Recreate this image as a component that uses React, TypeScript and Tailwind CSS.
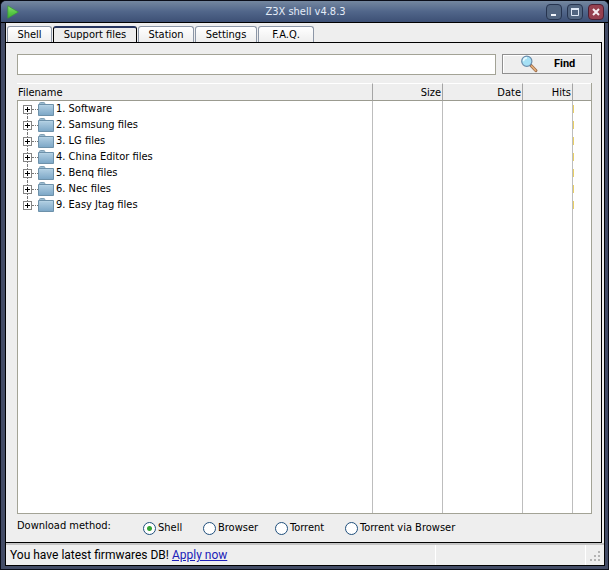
import { useState } from 'react'

const tabs = [
  { name: 'Shell', width: 'w-[45px]' },
  { name: 'Support files', width: 'w-[84px]' },
  { name: 'Station', width: 'w-[56px]' },
  { name: 'Settings', width: 'w-[62px]' },
  { name: 'F.A.Q.', width: 'w-[56px]' },
]

const folders = [
  '1. Software',
  '2. Samsung files',
  '3. LG files',
  '4. China Editor files',
  '5. Benq files',
  '6. Nec files',
  '9. Easy Jtag files',
]

const methods = [
  { name: 'Shell', width: 'w-[60px]' },
  { name: 'Browser', width: 'w-[72px]' },
  { name: 'Torrent', width: 'w-[70px]' },
  { name: 'Torrent via Browser', width: '' },
]

function PlayIcon() {
  return (
    <svg className="w-3 h-3.5" viewBox="0 0 12 14" aria-hidden="true">
      <defs>
        <linearGradient id="play" x1="0" y1="0" x2="0" y2="1">
          <stop offset="0" stopColor="#8be070" />
          <stop offset="0.5" stopColor="#5ccb48" />
          <stop offset="1" stopColor="#3fb030" />
        </linearGradient>
      </defs>
      <path d="M0.8 0.8v12.4L11.4 7z" fill="url(#play)" stroke="#3a9a3a" strokeWidth="0.8" strokeLinejoin="round" />
    </svg>
  )
}

function FolderIcon() {
  return (
    <svg className="w-4 h-4 shrink-0" viewBox="0 0 16 16" aria-hidden="true">
      <defs>
        <linearGradient id="folder" x1="0" y1="0" x2="0" y2="1">
          <stop offset="0" stopColor="#b4d1e4" />
          <stop offset="1" stopColor="#7ba6c6" />
        </linearGradient>
      </defs>
      <path d="M1.5 4V2.5q0-1 1-1h3.4q.8 0 .9 1V4z" fill="#9dbdd2" stroke="#7f9fb4" />
      <path d="M0.5 3.5h15v11H.5z" fill="url(#folder)" stroke="#6d91aa" />
      <path d="M1.5 4.5h13" stroke="#b4d1e4" />
    </svg>
  )
}

function SearchIcon() {
  return (
    <svg className="w-[18px] h-[18px]" viewBox="0 0 18 18" aria-hidden="true">
      <path d="M11 10.5l4.8 5" stroke="#9a6b48" strokeWidth="3.2" strokeLinecap="round" />
      <path d="M11.6 11l4 4.3" stroke="#e3ad79" strokeWidth="1.7" strokeLinecap="round" />
      <circle cx="6.8" cy="6.3" r="5.1" fill="#a5e0f5" stroke="#6a8cab" strokeWidth="1.2" />
      <path d="M3.5 6.2a3.5 3.5 0 0 1 3.5-3.3" fill="none" stroke="#e6faff" strokeWidth="1.6" />
    </svg>
  )
}

function TitleBar() {
  const button = 'w-4 h-4 rounded-[4px] border flex items-center justify-center'
  return (
    <header className="h-[22px] shrink-0 flex items-center pl-1.5 pr-1 border-b border-black bg-linear-to-b from-[#74879f] via-[#51668a] to-[#3d5075]">
      <div className="w-[60px]">
        <PlayIcon />
      </div>
      <h1 className="flex-1 text-center text-[#e4ecf8]">Z3X shell v4.8.3</h1>
      <div className="w-[60px] flex justify-end gap-[5px]">
        <button aria-label="Minimize" className={`${button} border-[#26344f] bg-[#526580]`}>
          <svg className="w-3 h-3" viewBox="0 0 12 12"><path d="M3 9h5" stroke="#f2f6fc" strokeWidth="2" /></svg>
        </button>
        <button aria-label="Maximize" className={`${button} border-[#26344f] bg-[#526580]`}>
          <svg className="w-3 h-3" viewBox="0 0 12 12">
            <path d="M2.5 2.5h7v7h-7z" fill="none" stroke="#dfe8f5" />
            <path d="M2 3h8" stroke="#dfe8f5" strokeWidth="2" />
          </svg>
        </button>
        <button aria-label="Close" className={`${button} border-[#4c1f33] bg-[#96404f]`}>
          <svg className="w-3 h-3" viewBox="0 0 12 12"><path d="M3 3l6 6M9 3l-6 6" stroke="#f6eef2" strokeWidth="2" /></svg>
        </button>
      </div>
    </header>
  )
}

function FileTable() {
  const head = 'font-normal border-r border-[#a5a5a5] border-b border-b-[#9b9b90] px-px pt-0.5 pb-0'
  const cell = 'border-r border-[#bdbdbd] p-0'
  return (
    <div className="flex-1 min-h-0 border-r border-b border-[#a3a396]">
      <table className="w-full h-full table-fixed border-separate border-spacing-0 bg-white">
        <colgroup>
          <col />
          <col className="w-[70px]" />
          <col className="w-[80px]" />
          <col className="w-[50px]" />
          <col className="w-[18px]" />
        </colgroup>
        <thead>
          <tr className="h-[18px] bg-[#eeeeee]">
            <th className={`${head} text-left border-t border-t-white`}>Filename</th>
            <th className={`${head} text-right border-t border-t-white`}>Size</th>
            <th className={`${head} text-right border-t border-t-white`}>Date</th>
            <th className={`${head} text-right border-t border-t-white`}>Hits</th>
            <th aria-label="Rating" className="border-t border-t-white border-b border-b-[#9b9b90]" />
          </tr>
        </thead>
        <tbody>
          {folders.map((folder, i) => (
            <tr key={folder} className="h-4">
              <td className={`${cell} border-l border-l-[#a3a396]`}>
                <div className="flex items-center h-4 pl-[5px]">
                  <div className="flex flex-col items-center h-4 w-[9px] shrink-0">
                    <span className={`h-1 w-px shrink-0 ${i > 0 ? 'border-l border-dotted border-[#777]' : ''}`} />
                    <button aria-label={`Expand ${folder}`} className="w-[9px] h-[9px] shrink-0 border border-[#848484] bg-white flex">
                      <svg className="w-[7px] h-[7px]" viewBox="0 0 7 7"><path d="M1 3.5h5M3.5 1v5" stroke="#000" /></svg>
                    </button>
                    <span className={`h-[3px] w-px shrink-0 ${i < folders.length - 1 ? 'border-l border-dotted border-[#777]' : ''}`} />
                  </div>
                  <span className="w-1.5 h-px border-t border-dotted border-[#777]" />
                  <FolderIcon />
                  <span className="pl-0.5 leading-4 whitespace-nowrap">{folder}</span>
                </div>
              </td>
              <td className={cell} />
              <td className={cell} />
              <td className={cell} />
              <td className="p-0"><div className="w-px h-2 bg-[#e8cf66]" /></td>
            </tr>
          ))}
          <tr>
            <td className={`${cell} border-l border-l-[#a3a396]`} />
            <td className={cell} />
            <td className={cell} />
            <td className={cell} />
            <td className="p-0" />
          </tr>
        </tbody>
      </table>
    </div>
  )
}

function App() {
  const [tab, setTab] = useState('Support files')
  const [method, setMethod] = useState('Shell')

  return (
    <div className="h-screen bg-black">
      <div className="h-full flex flex-col border border-[#0a0d18] rounded-t-md overflow-hidden bg-[#434c66] text-black text-[11px] leading-[14px] font-['DejaVu_Sans_Condensed','Noto_Sans',sans-serif]">
        <TitleBar />
        <div className="flex-1 min-h-0 flex flex-col ml-1 mr-[3px] mb-[3px] border-x border-b border-black bg-[#eeeeee]">
          <nav className="flex items-end gap-px h-[19px] shrink-0 pl-px">
            {tabs.map(({ name, width }) => (
              <button
                key={name}
                onClick={() => setTab(name)}
                className={
                  name === tab
                    ? `${width} h-4 rounded-t-[3px] border-x border-t-2 border-black border-t-[#26355f] bg-[#eeeeee]`
                    : `${width} h-4 rounded-t-[3px] border-x border-t border-[#8c96a6] bg-linear-to-b from-white to-[#eeeeee]`
                }
              >
                {name}
              </button>
            ))}
          </nav>

          <main className="flex-1 min-h-0 flex flex-col mr-0.5 border-t border-r border-b border-black pl-[11px] pr-[9px] pt-[11px]">
            <form className="flex gap-1.5 mb-2 shrink-0" onSubmit={(e) => e.preventDefault()}>
              <input type="text" aria-label="Search files" className="flex-1 min-w-0 h-[21px] px-1 border border-[#a3a396] bg-white outline-none" />
              <button type="submit" className="w-[90px] h-5 flex items-center pl-[17px] gap-4 border border-[#8f8f8f] bg-[#eeeeee] font-[Roboto,sans-serif] font-bold shadow-[inset_1px_1px_0_#fff]">
                <SearchIcon />
                Find
              </button>
            </form>

            <FileTable />

            <div role="radiogroup" aria-labelledby="method-label" className="flex items-center h-7 shrink-0 whitespace-nowrap">
              <span id="method-label" className="w-[126px] pb-1">Download method:</span>
              {methods.map((m) => (
                <label key={m.name} className={`flex items-center gap-0.5 ${m.width}`}>
                  <input
                    type="radio"
                    name="method"
                    checked={method === m.name}
                    onChange={() => setMethod(m.name)}
                    className="appearance-none w-[13px] h-[13px] shrink-0 rounded-full border border-[#1f4f7c] bg-white checked:bg-[radial-gradient(circle,#35a535_0_2px,#fff_3px)]"
                  />
                  {m.name}
                </label>
              ))}
            </div>
          </main>

          <footer className="h-[22px] shrink-0 flex items-center border-t-2 border-[#c4c4c4] pl-1 text-[12px] font-[Roboto,sans-serif]">
            <p className="flex-1">
              You have latest firmwares DB!{' '}
              <a href="#apply" className="text-[#2020b8] underline">Apply now</a>
            </p>
            <span className="w-[150px] h-full border-l border-white" />
            <svg className="w-[19px] h-full border-l border-white" viewBox="0 0 18 20" fill="#b4b4b4" aria-hidden="true">
              <path d="M12 6h2v2h-2zM12 10h2v2h-2zM12 14h2v2h-2zM8 10h2v2H8zM8 14h2v2H8zM4 14h2v2H4z" />
            </svg>
          </footer>
        </div>
      </div>
    </div>
  )
}

export default App
